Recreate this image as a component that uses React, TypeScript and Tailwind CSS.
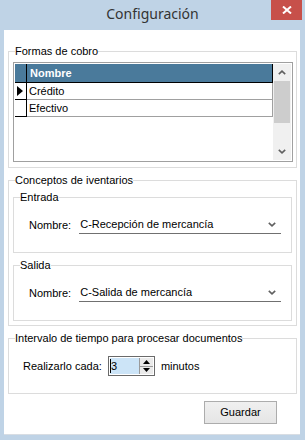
import React from "react";

const font = { fontFamily: '"Liberation Sans", Arial, sans-serif' };

function Chevron({ up }: { up?: boolean }) {
  return (
    <svg width="8" height="5" viewBox="0 0 8 5">
      <path
        d={up ? "M0.8 4.2 L4 1.2 L7.2 4.2" : "M0.8 0.8 L4 3.8 L7.2 0.8"}
        fill="none"
        stroke="#606060"
        strokeWidth="1.6"
      />
    </svg>
  );
}

function Group({
  title,
  className,
  children,
}: {
  title: string;
  className?: string;
  children: React.ReactNode;
}) {
  return (
    <fieldset className={"border border-[#dcdcdc] min-w-0 " + (className || "")}>
      <legend className="ml-[6px] p-0 leading-[15px] text-black">{title}</legend>
      {children}
    </fieldset>
  );
}

function ComboRow({ value }: { value: string }) {
  return (
    <div className="flex items-center h-[18px] pl-[15px] gap-[8px]">
      <span>Nombre:</span>
      <div className="w-[202px] h-[18px] border-b border-[#707070] flex items-center justify-between pr-[5px]">
        <span className="pl-[1px]">{value}</span>
        <Chevron />
      </div>
    </div>
  );
}

export default function App() {
  const rows = ["Crédito", "Efectivo"];

  return (
    <div
      className="w-[305px] h-[440px] bg-[#bfd3e6] flex flex-col text-[11px] text-black"
      style={font}
    >
      {/* barra de titulo */}
      <div className="relative h-[30px] flex items-start justify-center pt-[6px]">
        <span className="text-[14px] text-[#333] leading-[16px]" style={{ fontFamily: '"Noto Sans", sans-serif' }}>
          Configuración
        </span>
        <div className="absolute right-[3px] top-0 w-[31px] h-[20px] bg-[#c7504a] flex items-center justify-center">
          <svg width="10" height="8" viewBox="0 0 10 8">
            <path d="M1 0.5 L9 7.5 M9 0.5 L1 7.5" stroke="#fff" strokeWidth="2" />
          </svg>
        </div>
      </div>

      {/* area cliente */}
      <div className="flex-1 ml-[4px] mr-[5px] mb-[5px] bg-white border-b border-[#d8dde3] pl-[4px] pr-[3px] pt-[14px] flex flex-col">
        <Group title="Formas de cobro">
          <div className="pt-[3px] pl-[4px] pr-[3px] pb-[5px]">
            <div className="border border-[#a0a0a0] p-[1px] flex h-[100px]">
              <div className="w-[258px] flex flex-col">
                <div className="flex h-[19px] bg-[#4a7a9b] border-b border-black">
                  <div className="w-[12px] border-r border-black" />
                  <div className="flex-1 border-r border-black pl-[3px] font-bold text-white leading-[18px]">
                    Nombre
                  </div>
                </div>
                {rows.map((r, i) => (
                  <div key={r} className="flex h-[17px]">
                    <div className="w-[12px] border-r border-b border-black flex items-center pl-[2px]">
                      {i === 0 && (
                        <svg width="6" height="10" viewBox="0 0 6 10">
                          <path d="M0 0 L6 5 L0 10 Z" fill="#000" />
                        </svg>
                      )}
                    </div>
                    <div className="flex-1 border-r border-b border-[#a0a0a0] pl-[2px] leading-[16px]">
                      {r}
                    </div>
                  </div>
                ))}
              </div>
              <div className="w-[18px] bg-[#f0f0f0] flex flex-col">
                <div className="h-[17px] flex items-center justify-center">
                  <Chevron up />
                </div>
                <div className="h-[42px] mx-[1px] bg-[#cdcdcd]" />
                <div className="flex-1" />
                <div className="h-[17px] flex items-center justify-center">
                  <Chevron />
                </div>
              </div>
            </div>
          </div>
        </Group>

        <Group title="Conceptos de iventarios" className="mt-[5px]">
          <div className="pt-[2px] px-[4px] pb-[4px]">
            <Group title="Entrada">
              <div className="pt-[11px] pb-[18px]">
                <ComboRow value="C-Recepción de mercancía" />
              </div>
            </Group>
            <Group title="Salida" className="mt-[5px]">
              <div className="pt-[11px] pb-[18px]">
                <ComboRow value="C-Salida de mercancía" />
              </div>
            </Group>
          </div>
        </Group>

        <Group title="Intervalo de tiempo para procesar documentos" className="mt-[5px]">
          <div className="pt-[10px] pb-[17px] pl-[14px] flex items-center">
            <span>Realizarlo cada:</span>
            <div className="ml-[6px] w-[47px] h-[20px] border border-[#6a6a6a] flex p-[1px]">
              <div className="flex-1 bg-[#cce4f7] flex items-center relative pl-[1px]">
                <span className="border-l border-black h-[14px] absolute left-[0px]" />
                <span className="leading-[14px]">3</span>
              </div>
              <div className="w-[14px] flex flex-col border-l border-[#9a9a9a] bg-[#eaeaea]">
                <div className="flex-1 flex items-center justify-center border-b border-[#9a9a9a]">
                  <svg width="7" height="4" viewBox="0 0 7 4">
                    <path d="M0 4 L3.5 0 L7 4 Z" fill="#000" />
                  </svg>
                </div>
                <div className="flex-1 flex items-center justify-center">
                  <svg width="7" height="4" viewBox="0 0 7 4">
                    <path d="M0 0 L3.5 4 L7 0 Z" fill="#000" />
                  </svg>
                </div>
              </div>
            </div>
            <span className="ml-[6px]">minutos</span>
          </div>
        </Group>

        <div className="flex justify-end mt-[7px] mr-[20px]">
          <button className="w-[73px] h-[23px] border border-[#acacac] bg-gradient-to-b from-[#f0f0f0] to-[#e5e5e5] text-[11px] text-black">
            Guardar
          </button>
        </div>
      </div>
    </div>
  );
}
